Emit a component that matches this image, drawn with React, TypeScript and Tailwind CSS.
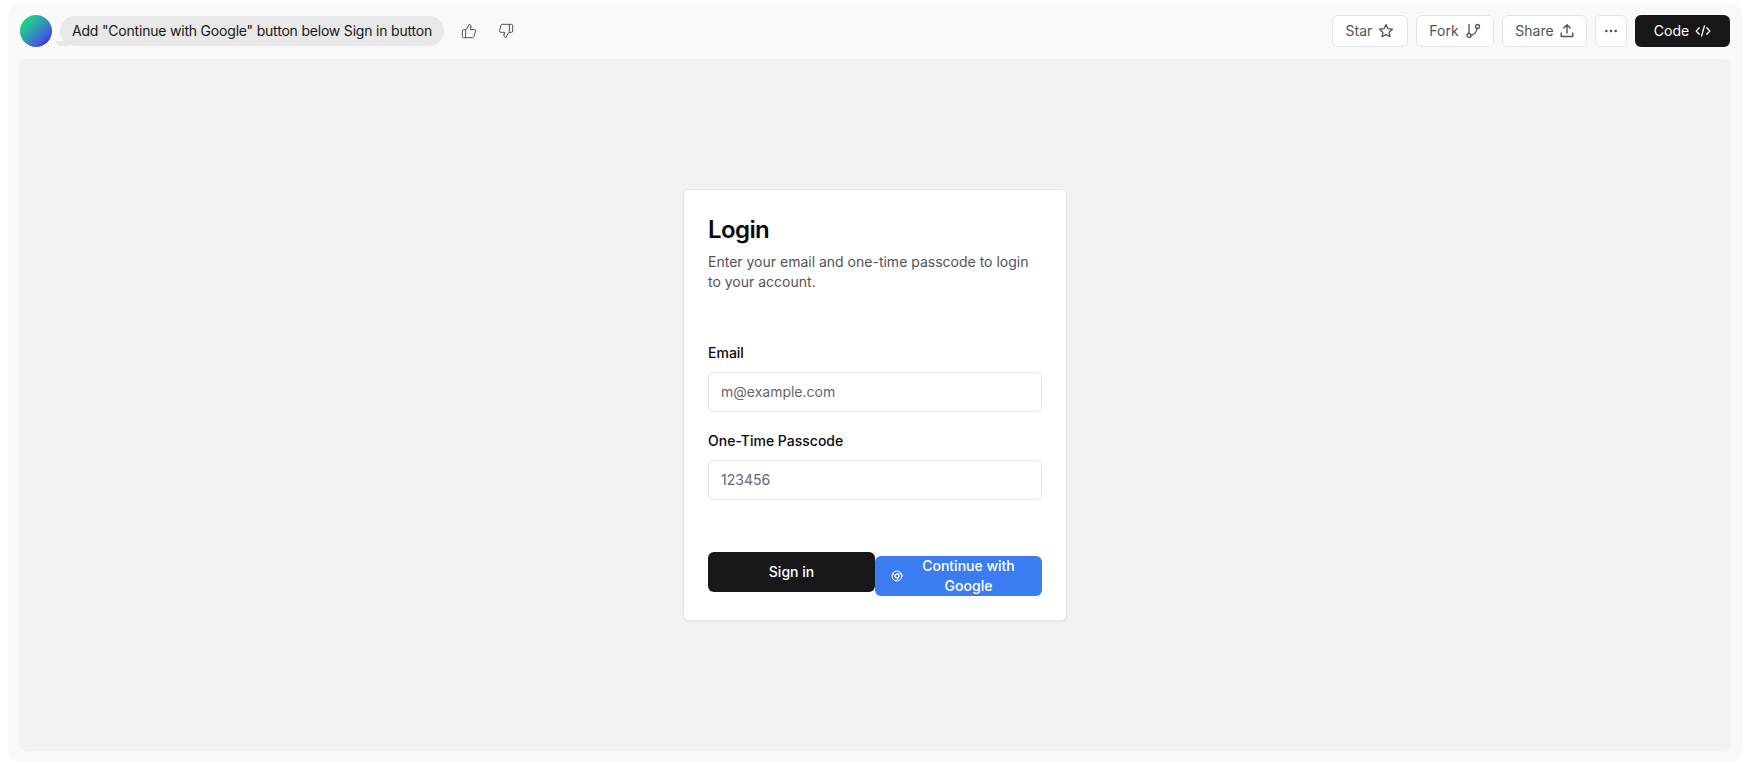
import { Chrome, Ellipsis, ThumbsDown, ThumbsUp } from "lucide-react";

function StarIcon() {
  return (
    <svg width="16" height="16" viewBox="0 0 16 16" fill="none" stroke="currentColor" strokeWidth="1.3" strokeLinejoin="round">
      <path d="M8 1.6l1.9 4.1 4.5.5-3.3 3.1.9 4.5L8 11.6l-4 2.2.9-4.5L1.6 6.2l4.5-.5z" />
    </svg>
  );
}

function ForkIcon() {
  return (
    <svg width="16" height="16" viewBox="0 0 16 16" fill="none" stroke="currentColor" strokeWidth="1.3" strokeLinecap="round">
      <path d="M4 1.5v9" />
      <circle cx="4" cy="12.5" r="2" />
      <circle cx="12.5" cy="3.5" r="2" />
      <path d="M12 5.5c-.5 3.5-2.5 6-6 7" />
    </svg>
  );
}

function ShareIcon() {
  return (
    <svg width="14" height="16" viewBox="0 0 14 16" fill="none" stroke="currentColor" strokeWidth="1.4" strokeLinecap="round" strokeLinejoin="round">
      <path d="M7 10V2M3.8 5L7 1.8 10.2 5" />
      <path d="M1.2 10v3.5h11.6V10" />
    </svg>
  );
}

function CodeIcon() {
  return (
    <svg width="16" height="16" viewBox="0 0 16 16" fill="none" stroke="currentColor" strokeWidth="1.3" strokeLinecap="round" strokeLinejoin="round">
      <path d="M4.2 4.8L1.2 8l3 3.2M11.8 4.8l3 3.2-3 3.2M9.4 3L6.6 13" />
    </svg>
  );
}

function HeaderButton({ label, icon, className }: { label: string; icon: React.ReactNode; className: string }) {
  return (
    <button className={`h-[32px] flex items-center justify-center gap-[6px] bg-white border border-[#e5e5e5] rounded-[6px] text-[14px] text-[#525252] ${className}`}>
      {label}
      {icon}
    </button>
  );
}

export default function App() {
  return (
    <div className="h-[767px] bg-white pt-[3px] pb-[5px] px-[8px] font-['Inter',sans-serif]">
      <div className="h-full bg-[#f9f9f9] rounded-[12px] px-[11px] pb-[11px] flex flex-col">
        <header className="h-[56px] shrink-0 flex items-center justify-between pb-[1px]">
          <div className="flex items-center pl-[1px]">
            <div className="w-[32px] h-[32px] rounded-full bg-gradient-to-br from-[#14d87a] from-15% to-[#4a2fe0] to-85%" />
            <div className="relative ml-[8px] h-[30px] px-[12px] flex items-center rounded-full bg-[#e8e8e8] text-[14px] tracking-[-0.2px] text-[#171717] whitespace-nowrap">
              <span className="absolute left-[-4px] bottom-0 w-[12px] h-[5px] bg-[#e8e8e8] rounded-bl-[4px]" />
              <span className="relative">Add "Continue with Google" button below Sign in button</span>
            </div>
            <button className="ml-[17px] text-[#525252]">
              <ThumbsUp size={16} strokeWidth={1.5} />
            </button>
            <button className="ml-[21px] text-[#525252]">
              <ThumbsDown size={16} strokeWidth={1.5} />
            </button>
          </div>
          <div className="flex items-center gap-[8px] pr-[1px]">
            <HeaderButton className="w-[76px]" label="Star" icon={<StarIcon />} />
            <HeaderButton className="w-[78px]" label="Fork" icon={<ForkIcon />} />
            <HeaderButton className="w-[85px]" label="Share" icon={<ShareIcon />} />
            <button className="w-[32px] h-[32px] flex items-center justify-center bg-white border border-[#e5e5e5] rounded-[6px] text-[#525252]">
              <Ellipsis size={16} />
            </button>
            <button className="h-[32px] w-[95px] flex items-center justify-center gap-[6px] bg-[#171717] rounded-[6px] text-[14px] text-white">
              Code
              <CodeIcon />
            </button>
          </div>
        </header>
        <main className="flex-1 bg-[#f1f2f4] rounded-[8px] flex items-center justify-center pb-[1px]">
          <div className="w-[384px] h-[432px] bg-white border border-[#e5e7eb] rounded-[6px] shadow-[0_1px_2px_rgba(0,0,0,0.05)] px-[24px] pt-[24px] flex flex-col">
            <h1 className="text-[24px] leading-[32px] font-semibold tracking-[-0.6px] text-[#09090b]">Login</h1>
            <p className="mt-[6px] text-[14px] leading-[20px] text-[#52525b]">
              Enter your email and one-time passcode to login to your account.
            </p>
            <label className="mt-[51px] text-[14px] leading-[20px] font-medium text-[#09090b]">Email</label>
            <input
              placeholder="m@example.com"
              className="mt-[9px] h-[40px] w-full px-[12px] border border-[#e4e4e7] rounded-[6px] text-[14px] placeholder:text-[#666670] outline-none"
            />
            <label className="mt-[19px] text-[14px] leading-[20px] font-medium text-[#09090b]">One-Time Passcode</label>
            <input
              placeholder="123456"
              className="mt-[9px] h-[40px] w-full px-[12px] border border-[#e4e4e7] rounded-[6px] text-[14px] placeholder:text-[#666670] outline-none"
            />
            <div className="mt-[52px] flex items-start">
              <button className="w-1/2 h-[40px] bg-[#18181b] rounded-[6px] text-[14px] font-medium text-white">Sign in</button>
              <button className="w-1/2 h-[40px] mt-[4px] bg-[#3b7cf0] rounded-[6px] text-[14px] leading-[20px] font-medium text-white flex items-center pl-[16px] pr-[16px]">
                <Chrome size={12} className="shrink-0" />
                <span className="flex-1 text-center pl-[8px]">Continue with Google</span>
              </button>
            </div>
          </div>
        </main>
      </div>
    </div>
  );
}
